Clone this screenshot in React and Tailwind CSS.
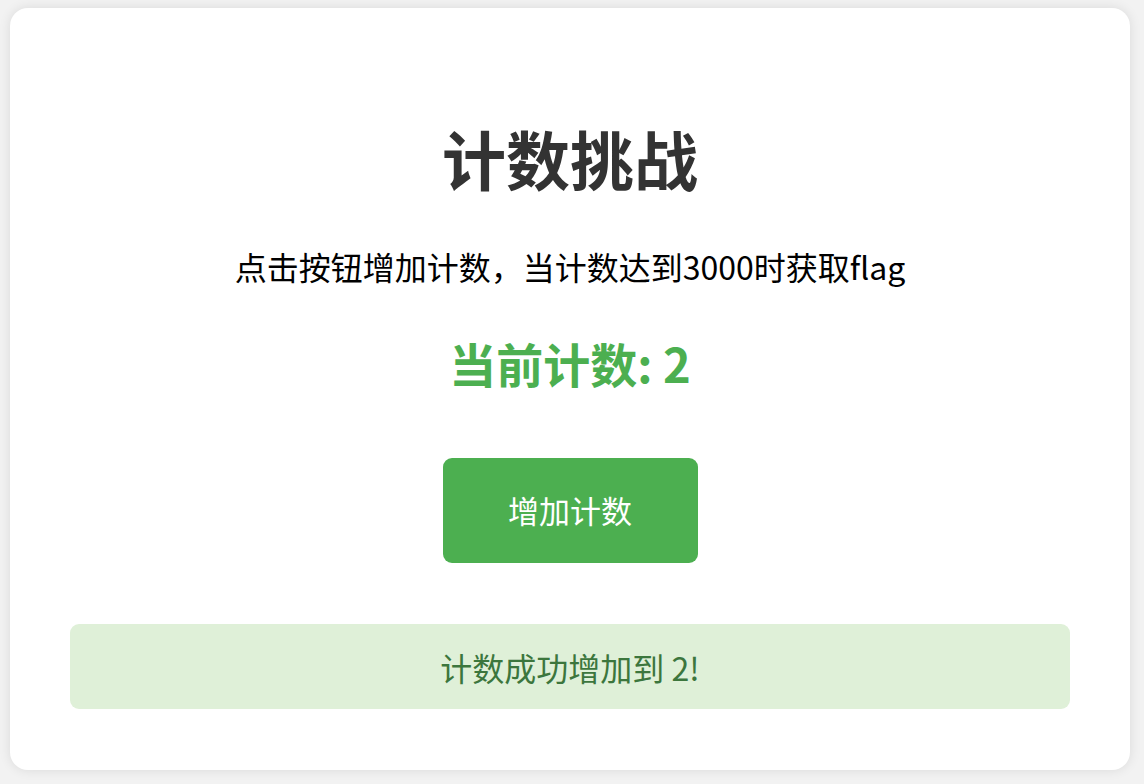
import React, { useState } from 'react';

export default function App() {
  const [count, setCount] = useState(2);
  const [message, setMessage] = useState('计数成功增加到 2!');

  const increment = () => {
    const next = count + 1;
    setCount(next);
    setMessage(`计数成功增加到 ${next}!`);
  };

  return (
    <div
      className="min-h-screen bg-[#f2f2f2] pl-[10px] pr-[14px] pt-[8px] pb-[14px]"
      style={{ fontFamily: '"Noto Sans CJK SC", "Noto Sans", sans-serif' }}
    >
      <div className="bg-white rounded-[18px] shadow-[0_0_12px_rgba(0,0,0,0.1)] px-[60px] pt-[60px] pb-[61px] flex flex-col items-center text-center">
        <h1 className="mt-[51px] text-[64px] leading-[76px] font-bold text-[#333333]">计数挑战</h1>
        <p className="mt-[51px] text-[32px] leading-[40px] text-black">
          点击按钮增加计数，当计数达到3000时获取flag
        </p>
        <div className="mt-[49px] text-[47px] leading-[56px] font-bold text-[#4caf50]">
          当前计数: {count}
        </div>
        <button
          onClick={increment}
          className="mt-[67px] w-[255px] h-[105px] rounded-[9px] bg-[#4caf50] text-white text-[31px] cursor-pointer"
        >
          增加计数
        </button>
        <div className="mt-[61px] w-full h-[85px] rounded-[9px] bg-[#dff0d8] text-[#3c763d] text-[32px] flex items-center justify-center">
          {message}
        </div>
      </div>
    </div>
  );
}
